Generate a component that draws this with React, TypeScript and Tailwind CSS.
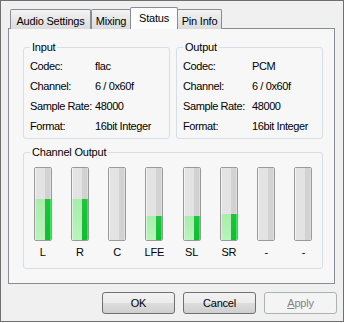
import React from 'react';

const rows = [
  ['Codec:', 'flac', 'PCM'],
  ['Channel:', '6 / 0x60f', '6 / 0x60f'],
  ['Sample Rate:', '48000', '48000'],
  ['Format:', '16bit Integer', '16bit Integer'],
];

const channels: { name: string; level: number }[] = [
  { name: 'L', level: 41 },
  { name: 'R', level: 41 },
  { name: 'C', level: 0 },
  { name: 'LFE', level: 24 },
  { name: 'SL', level: 24 },
  { name: 'SR', level: 26 },
  { name: '-', level: 0 },
  { name: '-', level: 0 },
];

const Tab = ({ label, active, w }: { label: string; active?: boolean; w: string }) => (
  <div
    className={
      active
        ? `${w} h-[22px] -mx-[1px] relative z-10 border border-b-0 border-[#898c95] rounded-t-[2px] bg-[#fcfcfc] flex items-start justify-center pt-[5px]`
        : `${w} h-[20px] mt-[2px] border border-b-0 border-[#898c95] rounded-t-[2px] bg-gradient-to-b from-[#f3f3f3] to-[#dcdcdc] flex items-start justify-center pt-[6px]`
    }
  >
    {label}
  </div>
);

const Group = ({ title, className, children }: { title: string; className: string; children: React.ReactNode }) => (
  <div className={`relative border border-[#d5dfe5] rounded-[3px] ${className}`}>
    <span className="absolute -top-[8px] left-[6px] bg-[#f7f7f7] px-[2px] leading-[14px] whitespace-nowrap">{title}</span>
    {children}
  </div>
);

const Info = ({ col }: { col: 1 | 2 }) => (
  <div className="flex flex-col pt-[8px] pl-[6px] tracking-[-0.4px]">
    {rows.map((r) => (
      <div key={r[0]} className="h-[20px] flex items-center whitespace-nowrap">
        <span className={col === 1 ? 'w-[65px] shrink-0' : 'w-[69px] shrink-0'}>{r[0]}</span>
        <span>{r[col]}</span>
      </div>
    ))}
  </div>
);

const Meter = ({ level }: { level: number }) => (
  <div className="w-[18px] h-[74px] border border-[#9a9a9a] rounded-[2px] flex flex-col overflow-hidden">
    <div className="flex-1 flex">
      <div className="w-[10px] bg-[#e3e3e3] border-l border-[#f4f4f4]" />
      <div className="w-[5px] bg-[#d2d2d2]" />
      <div className="flex-1 bg-[#dedede]" />
    </div>
    {level > 0 && (
      <div className="flex" style={{ height: level }}>
        <div className="w-[10px] bg-gradient-to-b from-[#a6eeaa] to-[#b8f4bc] border-l border-[#d4f8d4]" />
        <div className="w-[5px] bg-gradient-to-b from-[#17c83a] to-[#0cc030]" />
        <div className="flex-1 bg-[#4ed86a]" />
      </div>
    )}
  </div>
);

const Button = ({ children, disabled }: { children: React.ReactNode; disabled?: boolean }) => (
  <div
    className={
      disabled
        ? 'w-[73px] h-[22px] border border-[#adb2b5] rounded-[3px] bg-[#f4f4f4] text-[#838383] flex items-center justify-center'
        : 'w-[73px] h-[22px] border border-[#707070] rounded-[3px] bg-[linear-gradient(to_bottom,#f2f2f2_0%,#ebebeb_50%,#dddddd_50%,#cfcfcf_100%)] flex items-center justify-center'
    }
  >
    {children}
  </div>
);

export default function App() {
  return (
    <div
      className="w-[344px] h-[322px] bg-[#f0f0f0] border border-[#6f6f6f] text-black text-[11px] leading-none tracking-[-0.2px]"
      style={{ fontFamily: '"Liberation Sans", Arial, sans-serif' }}
    >
      <div className="pt-[6px] pl-[7px] pr-[8px]">
        <div className="flex pl-[2px] items-end h-[22px]">
          <Tab label="Audio Settings" w="w-[81px]" />
          <Tab label="Mixing" w="w-[40px]" />
          <Tab label="Status" active w="w-[48px]" />
          <Tab label="Pin Info" w="w-[45px]" />
        </div>
        <div className="-mt-[1px] h-[256px] border border-[#898c95] bg-[#f7f7f7] pl-[14px] pr-[11px] pt-[18px]">
          <div className="flex gap-[6px]">
            <Group title="Input" className="w-[147px] h-[92px]">
              <Info col={1} />
            </Group>
            <Group title="Output" className="w-[147px] h-[92px]">
              <Info col={2} />
            </Group>
          </div>
          <Group title="Channel Output" className="mt-[13px] w-[300px] h-[117px]">
            <div className="grid grid-cols-8 pt-[14px]">
              {channels.map((c, i) => (
                <div key={i} className="flex flex-col items-center">
                  <Meter level={c.level} />
                  <div className="mt-[6px] h-[12px]">{c.name}</div>
                </div>
              ))}
            </div>
          </Group>
        </div>
        <div className="flex justify-end gap-[8px] pt-[8px] -mr-[2px]">
          <Button>OK</Button>
          <Button>Cancel</Button>
          <Button disabled>
            <span>
              <span className="underline">A</span>pply
            </span>
          </Button>
        </div>
      </div>
    </div>
  );
}
